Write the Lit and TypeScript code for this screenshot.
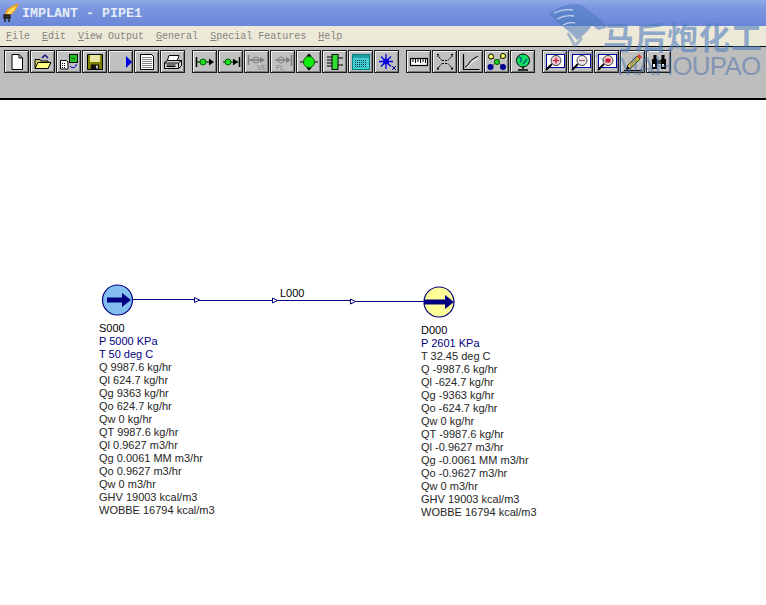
import { LitElement, html, css, svg, nothing } from 'lit';
import { customElement } from 'lit/decorators.js';

const NAVY = '#000080';

// toolbar icons, all drawn in a 20x18 box
const icons: Record<string, unknown> = {
  newDoc: svg`<path d="M5 1.500h7l3.500 3.500v11.500h-10.500z" fill="#fff" stroke="#000"/><path d="M12 1.500v3.500h3.500" fill="none" stroke="#000"/>`,
  open: svg`<path d="M2 15.500v-9h5l1 1.500h7v7.500z" fill="#c8c860" stroke="#000"/><path d="M2 15.500l3-6h13l-3 6z" fill="#ffff80" stroke="#000"/><path d="M9 5l3-3 3 3" fill="none" stroke="#000080" stroke-width="1.200"/>`,
  convert: svg`<path d="M1.500 7.500h6l1.500 1.500v7h-7.500z" fill="#fff" stroke="#000"/><path d="M3 10.500h4M3 12.500h4M3 14.500h4" stroke="#000" stroke-dasharray="1 1"/><rect x="10.500" y="1.500" width="8" height="8" fill="#20c020" stroke="#000"/><path d="M12.500 5.500h4" stroke="#000" stroke-dasharray="1 1"/><path d="M11 13a3.500 3.500 0 0 0 6 0M17 13v-2" fill="none" stroke="#0000c0"/>`,
  save: svg`<path d="M2.500 1.500h15v15h-15z" fill="#808000" stroke="#000"/><rect x="5" y="2" width="10" height="7" fill="#e8e8a0"/><rect x="6" y="11.500" width="8" height="5" fill="#111"/><rect x="11" y="12.500" width="2" height="3" fill="#c0c0c0"/>`,
  run: svg`<path d="M15 3l6 6-6 6z" fill="#0000e0"/>`,
  report: svg`<path d="M3.500 1.500h11l2 2v13h-13z" fill="#fff" stroke="#000"/><path d="M5.500 4.500h9M5.500 6.500h9M5.500 8.500h9M5.500 10.500h9M5.500 12.500h9M5.500 14.500h9" stroke="#000" stroke-dasharray="1 1"/>`,
  print: svg`<path d="M6 2.500h10l-2 6h-10z" fill="#fff" stroke="#000"/><path d="M1.500 9.500l3-2h14v5l-3 3h-14z" fill="#d8d8d8" stroke="#000"/><path d="M1.500 10h14v5.500M15.500 10l3-2.500" fill="none" stroke="#000"/><path d="M3.500 12h9M3.500 13.500h9" stroke="#000"/>`,
  pipeBoth: svg`<path d="M1.500 4v10" stroke="#000" stroke-width="1.500"/><path d="M2 9h15" stroke="#006000" stroke-width="1.500"/><circle cx="8" cy="9" r="3" fill="#20e020" stroke="#006000"/><path d="M14 5.500l5 3.500-5 3.500z" fill="#000"/>`,
  pipeEnd: svg`<path d="M18.500 4v10" stroke="#000" stroke-width="1.500"/><path d="M2 9h15" stroke="#006000" stroke-width="1.500"/><circle cx="7" cy="9" r="3" fill="#20e020" stroke="#006000"/><path d="M12 5.500l5 3.500-5 3.500z" fill="#000"/>`,
  pipeOffV: svg`<path d="M1.500 2v10M2 7h13" stroke="#808080" stroke-width="1.500"/><circle cx="9" cy="7" r="3" fill="none" stroke="#808080"/><path d="M13 4l5 3-5 3z" fill="#808080"/><text x="10" y="17" class="ti">VE</text>`,
  pipeOffF: svg`<path d="M18.500 2v11M2 7h13" stroke="#808080" stroke-width="1.500"/><circle cx="8" cy="7" r="3" fill="none" stroke="#808080"/><path d="M13 4l5 3-5 3z" fill="#808080"/><text x="3" y="17" class="ti">FL</text>`,
  node: svg`<path d="M1 9h18M10 1v16" stroke="#000" stroke-width="1.200"/><path d="M7 3.500l3-3 3 3zM7 14.500l3 3 3-3z" fill="#000"/><circle cx="10" cy="9" r="5.500" fill="#10f010" stroke="#006000"/>`,
  bank: svg`<rect x="7" y="1.500" width="6" height="15" fill="#30e030" stroke="#000"/><path d="M2 4h5M2 7h5M2 10h5M2 13h5M13 5h5M13 12h5" stroke="#000" stroke-width="1.100"/>`,
  table: svg`<rect x="1.500" y="1.500" width="17" height="15" fill="#40d0d0" stroke="#008080"/><rect x="2" y="2" width="16" height="3" fill="#20a0a0"/><path d="M4 7.500h12M4 9.500h12M4 11.500h12M4 13.500h12" stroke="#003060" stroke-dasharray="1 1"/>`,
  snow: svg`<path d="M9 1v15M2 8.500h14M4 3.500l10 10M14 3.500l-10 10" stroke="#0000e0" stroke-width="1.300"/><circle cx="9" cy="8.500" r="3" fill="#0000e0"/><path d="M15 13l4 4M19 13l-4 4" stroke="#000080"/>`,
  ruler: svg`<rect x="1.500" y="5.500" width="17" height="7" fill="#fff" stroke="#000" stroke-width="1.200"/><path d="M4 6v3M6.500 6v4M9 6v3M11.500 6v4M14 6v3M16.500 6v4" stroke="#000"/>`,
  merge: svg`<path d="M2 1.500h2M2 15.500h2M16 1.500h2M16 15.500h2M3 1v3M3 14v3M17 1v3M17 14v3" stroke="#000"/><path d="M4 4l3 3.500M4 14l3-3.500M16 4l-3 3.500M16 14l-3-3.500M7 7.500h6M7 10.500h6" stroke="#000" stroke-dasharray="2 1"/>`,
  chart: svg`<path d="M2.500 1v15.500h16" fill="none" stroke="#000" stroke-width="1.200"/><path d="M4 14c4-1 4-6 8-8l5-3" fill="none" stroke="#000"/><path d="M6 14c3-1 4-5 7-6l4-3" fill="none" stroke="#fff"/>`,
  network: svg`<path d="M4 14L16 3M6 5l10 9" stroke="#606000"/><circle cx="10" cy="9" r="2.500" fill="#20d020" stroke="#006000"/><circle cx="4" cy="3.500" r="2.500" fill="#ffff60" stroke="#000"/><circle cx="16" cy="3" r="2.500" fill="#ffff60" stroke="#000"/><circle cx="3.500" cy="14" r="3" fill="#000090"/><circle cx="16" cy="14" r="3" fill="#000090"/>`,
  globe: svg`<circle cx="10" cy="7.500" r="6.500" fill="#10e060" stroke="#000"/><path d="M6 4c3 1 3 3 1 5M10 11l4-5" fill="none" stroke="#006080" stroke-width="1.500"/><path d="M10 14v2M5 17h10" stroke="#000" stroke-width="1.500"/>`,
  zoomIn: svg`<rect x="1.500" y="1.500" width="18" height="13" fill="#fff" stroke="#0000a0"/><path d="M1 17l6-6" stroke="#000" stroke-width="2"/><circle cx="11" cy="7.500" r="5" fill="#f0d0d8" stroke="#404040"/><path d="M8 7.500h6M11 4.500v6" stroke="#c02040" stroke-width="1.300"/>`,
  zoomOut: svg`<rect x="1.500" y="1.500" width="18" height="13" fill="#fff" stroke="#0000a0"/><path d="M1 17l6-6" stroke="#000" stroke-width="2"/><circle cx="11" cy="7.500" r="5" fill="#f0e8e8" stroke="#404040"/><path d="M8 7.500h6" stroke="#a06070" stroke-width="1.300"/>`,
  zoomFit: svg`<rect x="1.500" y="1.500" width="18" height="13" fill="#fff" stroke="#0000a0"/><path d="M1 17l6-6" stroke="#000" stroke-width="2"/><circle cx="11" cy="7.500" r="5" fill="#f8d0d0" stroke="#404040"/><rect x="8.500" y="5.500" width="5" height="4" fill="#d01030"/>`,
  pencil: svg`<path d="M4 13L14 3l3 3L7 16z" fill="#e0c040" stroke="#404000"/><path d="M14 3l2-2 3 3-2 2z" fill="#e04040"/><path d="M4 13l-1 4 4-1z" fill="#000"/><path d="M1 17.500h18" stroke="#000"/>`,
  binoculars: svg`<rect x="3" y="6" width="5" height="10" fill="#000"/><rect x="12" y="6" width="5" height="10" fill="#000"/><rect x="4.500" y="2" width="3" height="5" fill="#000"/><rect x="12.500" y="2" width="3" height="5" fill="#000"/><rect x="8" y="7" width="4" height="4" fill="#404040"/><rect x="4" y="11" width="2" height="3" fill="#fff"/><rect x="13" y="11" width="2" height="3" fill="#fff"/>`,
};

const toolGroups: string[][] = [
  ['newDoc', 'open', 'convert', 'save', 'run', 'report', 'print'],
  ['pipeBoth', 'pipeEnd', 'pipeOffV', 'pipeOffF', 'node', 'bank', 'table', 'snow'],
  ['ruler', 'merge', 'chart', 'network', 'globe'],
  ['zoomIn', 'zoomOut', 'zoomFit', 'pencil', 'binoculars'],
];

const sourceLines = [
  ['S000', 'k'], ['P 5000 KPa', 'b'], ['T 50 deg C', 'b'], ['Q 9987.6 kg/hr', ''], ['Ql 624.7 kg/hr', ''],
  ['Qg 9363 kg/hr', ''], ['Qo 624.7 kg/hr', ''], ['Qw 0 kg/hr', ''], ['QT 9987.6 kg/hr', ''], ['Ql 0.9627 m3/hr', ''],
  ['Qg 0.0061 MM m3/hr', ''], ['Qo 0.9627 m3/hr', ''], ['Qw 0 m3/hr', ''], ['GHV 19003 kcal/m3', ''], ['WOBBE 16794 kcal/m3', ''],
];

const sinkLines = [
  ['D000', 'k'], ['P 2601 KPa', 'b'], ['T 32.45 deg C', ''], ['Q -9987.6 kg/hr', ''], ['Ql -624.7 kg/hr', ''],
  ['Qg -9363 kg/hr', ''], ['Qo -624.7 kg/hr', ''], ['Qw 0 kg/hr', ''], ['QT -9987.6 kg/hr', ''], ['Ql -0.9627 m3/hr', ''],
  ['Qg -0.0061 MM m3/hr', ''], ['Qo -0.9627 m3/hr', ''], ['Qw 0 m3/hr', ''], ['GHV 19003 kcal/m3', ''], ['WOBBE 16794 kcal/m3', ''],
];

@customElement('app-root')
export class AppRoot extends LitElement {
  static styles = css`
    :host {
      display: block;
      position: relative;
      width: 766px;
      height: 605px;
      overflow: hidden;
      background: #fff;
      font-family: 'Liberation Sans', Arial, sans-serif;
    }

    .title {
      display: flex;
      align-items: center;
      gap: 3px;
      height: 26px;
      padding-left: 2px;
      box-sizing: border-box;
      background: linear-gradient(#8fa9e8 0, #7c97e0 30%, #6a86d8 100%);
      font-family: 'Liberation Mono', monospace;
      font-size: 13.33px;
      font-weight: 700;
      color: #e4ecf8;
      white-space: pre;
    }

    .menu {
      display: flex;
      gap: 12px;
      height: 20px;
      align-items: center;
      padding-left: 6px;
      background: #ece9d8;
      font-family: 'Liberation Mono', monospace;
      font-size: 10px;
      color: #85857c;
      white-space: pre;
    }

    .menu u {
      text-underline-offset: 1px;
    }

    .toolbar {
      display: flex;
      gap: 7px;
      height: 54px;
      box-sizing: border-box;
      padding: 3px 0 0 4px;
      background: #bdbdbd;
      border-top: 1px solid #000;
      border-bottom: 2px solid #000;
      align-items: flex-start;
    }

    .group {
      display: flex;
      gap: 1px;
    }

    .btn {
      width: 25px;
      height: 23px;
      box-sizing: border-box;
      display: flex;
      align-items: center;
      justify-content: center;
      background: #c0c0c0;
      border: 1px solid #1c1c1c;
      box-shadow: inset 1px 1px 0 #f4f4f4, inset -1px -1px 0 #7c7c7c;
    }

    .btn svg {
      width: 20px;
      height: 18px;
      overflow: visible;
    }

    .ti {
      font-family: 'Liberation Sans', sans-serif;
      font-size: 7px;
      fill: #808080;
    }

    .canvas {
      position: relative;
      height: 505px;
    }

    .pipes {
      position: absolute;
      left: 0;
      top: 0;
      width: 766px;
      height: 505px;
    }

    .label {
      position: absolute;
      font-size: 11px;
      line-height: 13px;
      color: #262626;
      white-space: nowrap;
    }

    .k {
      color: #000;
    }

    .b {
      color: #000080;
    }

    .mark {
      position: absolute;
      left: 0;
      top: 0;
      pointer-events: none;
    }

    .mark-cn {
      position: absolute;
      left: 603px;
      top: 19px;
      font-family: 'Noto Sans CJK SC', sans-serif;
      font-size: 31px;
      font-weight: 700;
      line-height: 34px;
      letter-spacing: 1px;
      color: rgba(80, 125, 190, 0.62);
      white-space: nowrap;
    }

    .mark-en {
      position: absolute;
      left: 617px;
      top: 53px;
      font-family: 'Liberation Sans', sans-serif;
      font-size: 26px;
      line-height: 26px;
      letter-spacing: -0.800px;
      color: rgba(70, 110, 170, 0.5);
      white-space: nowrap;
    }

    .horse {
      position: absolute;
      left: 545px;
      top: 0;
      width: 70px;
      height: 80px;
    }
  `;

  private renderLines(lines: string[][], left: number, top: number) {
    return html`<div class="label" style="left:${left}px;top:${top}px">
      ${lines.map(([t, c]) => html`<div class=${c || nothing}>${t}</div>`)}
    </div>`;
  }

  render() {
    return html`
      <div class="title">
        <svg width="17" height="20" viewBox="0 0 17 20">
          <path d="M3 12C3 6 9 3 17 0c-2 4-3 8-7 11-2 2-5 2-7 1z" fill="#f0a020"/>
          <path d="M5 11C6 7 10 5 14 3c-1 3-3 6-6 8z" fill="#ffe060"/>
          <path d="M2 12h6v3H2zM3 15v4M7 15v4" stroke="#222" stroke-width="1.500" fill="#333"/>
        </svg>
        <span>IMPLANT - PIPE1</span>
      </div>
      <div class="menu">
        <span><u>F</u>ile</span>
        <span><u>E</u>dit</span>
        <span><u>V</u>iew Output</span>
        <span><u>G</u>eneral</span>
        <span><u>S</u>pecial Features</span>
        <span><u>H</u>elp</span>
      </div>
      <div class="toolbar">
        ${toolGroups.map(
          (g) => html`<div class="group">
            ${g.map((name) => html`<div class="btn"><svg viewBox="0 0 20 18">${icons[name]}</svg></div>`)}
          </div>`,
        )}
      </div>
      <div class="canvas">
        <svg class="pipes" viewBox="0 100 766 505">
          <path d="M132 299.500h62M199 300.500h152M356 301.500h68" stroke=${NAVY} fill="none"/>
          <path d="M194.500 297.500l5 2.500-5 2.500zM272.500 298l5 2.500-5 2.500zM350.500 299l5 2.500-5 2.500z" fill="#fff" stroke=${NAVY}/>
          <circle cx="117.500" cy="300" r="15" fill="#84bdf0" stroke=${NAVY} stroke-width="1.200"/>
          <path d="M107 300h16" stroke=${NAVY} stroke-width="5"/>
          <path d="M122 293l9 7-9 7z" fill=${NAVY}/>
          <circle cx="439" cy="302" r="15" fill="#ffff99" stroke=${NAVY} stroke-width="1.200"/>
          <path d="M424 302h22" stroke=${NAVY} stroke-width="5"/>
          <path d="M445 295l9 7-9 7z" fill=${NAVY}/>
        </svg>
        <div class="label k" style="left:280px;top:187px">L000</div>
        ${this.renderLines(sourceLines, 99, 222)}
        ${this.renderLines(sinkLines, 421, 224)}
      </div>
      <div class="mark">
        <svg class="horse" viewBox="0 0 70 80">
          <path d="M4 14C12 8 20 4 32 4c5 0 8 3 12 7 6 3 12 9 17 14v3l-8 2-6-5c-3 5-9 11-15 15l-5-6C20 28 14 24 4 14z" fill="rgba(75,120,190,0.55)"/>
          <path d="M9 13c7-3 13-4 19-3M12 19c6-3 11-4 17-3M18 25c4-2 8-3 12-2" stroke="rgba(230,235,245,0.75)" stroke-width="1.300" fill="none"/>
          <path d="M23 33l7 13 7-8" fill="none" stroke="rgba(80,120,180,0.45)" stroke-width="3"/>
          <path d="M18 52c16-3 30 0 44 10" fill="none" stroke="rgba(90,125,175,0.35)" stroke-width="2"/>
        </svg>
        <div class="mark-cn">马后炮化工</div>
        <div class="mark-en">MAHOUPAO</div>
      </div>
    `;
  }
}
